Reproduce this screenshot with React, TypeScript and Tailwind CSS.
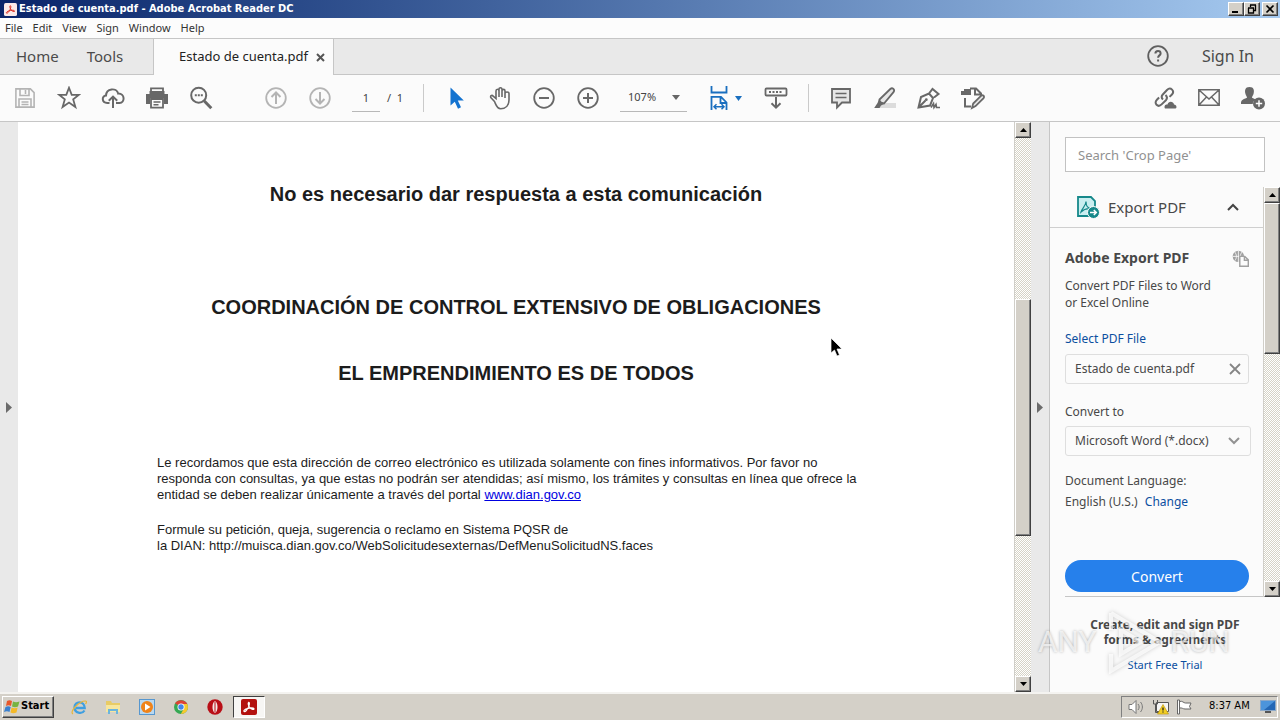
import type { ReactNode } from "react";

const DITHER =
  "bg-[repeating-conic-gradient(#ffffff_0_25%,#d6d3c6_0_50%)] bg-[length:2px_2px]";
const BEVEL =
  "bg-[#d4d0c8] border border-t-white border-l-white border-r-[#404040] border-b-[#404040] shadow-[inset_-1px_-1px_0_#808080]";

function Icon({ children, size = 24, className = "" }: { children: ReactNode; size?: number; className?: string }) {
  return (
    <svg
      width={size}
      height={size}
      viewBox="0 0 24 24"
      fill="none"
      stroke="currentColor"
      strokeWidth="1.8"
      className={`shrink-0 ${className}`}
      aria-hidden="true"
    >
      {children}
    </svg>
  );
}

function Tool({ label, children, faded = false }: { label: string; children: ReactNode; faded?: boolean }) {
  return (
    <button
      type="button"
      aria-label={label}
      className={`flex h-11 w-11 shrink-0 items-center justify-center ${faded ? "text-[#b4b4b4]" : "text-[#686868]"}`}
    >
      <Icon>{children}</Icon>
    </button>
  );
}

function Separator() {
  return <span className="h-7 w-px shrink-0 bg-[#cacaca]" />;
}

function AcrobatMark({ size, fill, stroke }: { size: number; fill: string; stroke: string }) {
  return (
    <svg width={size} height={size} viewBox="0 0 16 16" aria-hidden="true" className="shrink-0">
      <rect width="16" height="16" rx="2" fill={fill} />
      <path
        d="M3 12.4c-.7-.8 1.2-2.2 3.2-2.8 2.4-.8 6.4-1 6.8.2.4 1.3-2.6.8-4.2-1.2C7.400 6.800 6.700 4 7.600 3.400c1-.5 1 1.800.3 3.700-.9 2.400-3.600 6.500-4.900 5.300z"
        fill="none"
        stroke={stroke}
        strokeWidth="1.2"
      />
    </svg>
  );
}

function TitleBar() {
  const control = `flex h-[14px] w-4 items-center justify-center text-black ${BEVEL}`;
  return (
    <header className="flex h-[18px] shrink-0 items-center bg-gradient-to-r from-[#0a246a] to-[#a6caf0] pl-1 pr-[2px]">
      <AcrobatMark size={13} fill="#fbe9e8" stroke="#d8281c" />
      <h1 className="ml-[2px] grow whitespace-nowrap font-['DejaVu_Sans_Condensed','DejaVu_Sans',sans-serif] text-[11px] font-bold text-white">
        Estado de cuenta.pdf - Adobe Acrobat Reader DC
      </h1>
      <button type="button" aria-label="Minimize" className={control}>
        <svg width="10" height="10" viewBox="0 0 10 10"><path d="M1 7h6v2H1z" /></svg>
      </button>
      <button type="button" aria-label="Restore" className={control}>
        <svg width="10" height="10" viewBox="0 0 10 10">
          <path d="M3 1h6M3.500 1v2M8.500 1v5.500H7M1 4h6M1.500 4v5h5V4" fill="none" stroke="#000" strokeWidth="1.3" />
        </svg>
      </button>
      <button type="button" aria-label="Close" className={`ml-[2px] ${control}`}>
        <svg width="10" height="10" viewBox="0 0 10 10"><path d="M1.500 1.500l7 7M8.500 1.500l-7 7" stroke="#000" strokeWidth="1.7" /></svg>
      </button>
    </header>
  );
}

function MenuBar() {
  return (
    <nav className="flex h-5 shrink-0 items-center gap-[10px] bg-[#fcfcfc] pl-[5px] font-['Noto_Sans',sans-serif] text-[11px] text-[#333]">
      {["File", "Edit", "View", "Sign", "Window", "Help"].map((name) => (
        <button type="button" key={name}>{name}</button>
      ))}
    </nav>
  );
}

function TabBar() {
  return (
    <div className="flex h-[37px] shrink-0 border-y border-[#c6c6c6] bg-[#e9e9e9] text-[15px] text-[#4b4b4b]">
      <div className="flex w-[153px] shrink-0 items-center gap-7 pl-4">
        <button type="button">Home</button>
        <button type="button">Tools</button>
      </div>
      <div className="-mb-px flex w-[181px] shrink-0 items-center justify-end gap-2 border-x border-[#c6c6c6] bg-[#fbfbfb] pr-2 text-[13px] text-[#222]">
        <span>Estado de cuenta.pdf</span>
        <button type="button" aria-label="Close tab" className="text-[#555]">
          <svg width="9" height="9" viewBox="0 0 9 9"><path d="M1 1l7 7M8 1l-7 7" stroke="currentColor" strokeWidth="2" /></svg>
        </button>
      </div>
      <div className="flex grow items-center justify-end gap-8 pb-px pr-[26px] text-[16px]">
        <button type="button" aria-label="Help" className="text-[#5f5f5f]">
          <Icon>
            <circle cx="12" cy="12" r="9.8" />
            <path d="M9.400 9.500c0-3.400 5.200-3.300 5.200-.1 0 2-2.500 2-2.500 4.300M12.100 15.500v2" strokeWidth="2" />
          </Icon>
        </button>
        <button type="button">Sign In</button>
      </div>
    </div>
  );
}

function Toolbar() {
  return (
    <div className="flex h-[47px] shrink-0 items-center border-b border-[#c6c6c6] bg-[#fbfbfb] pl-[3px] pr-[5px] text-[11px] text-[#444]">
      <Tool label="Save" faded>
        <path d="M2.900 2.900h14.500l3.700 3.700v14.500H2.900zM7 3v6.500h9V3M12.500 4v4M6 21v-8h12v8M8.500 16h7M8.500 18.500h7" strokeWidth="1.6" />
      </Tool>
      <Tool label="Add to favorites">
        <path d="M12 1.800l2.700 7h7.300l-5.800 4.600 2.200 7.600L12 16.600 5.600 21l2.200-7.600L2 8.800h7.300z" />
      </Tool>
      <Tool label="Upload to cloud">
        <path d="M8.500 17H6.200C.8 17 .3 10.100 5 9.600 5.200 2.300 15.500 1.200 17.200 7.600c6.900-.3 7 9.400 1.300 9.400H15M12 22V11M7.800 14.800L12 10.600l4.200 4.200" strokeWidth="2" />
      </Tool>
      <Tool label="Print">
        <path d="M6 7V2.400h12V7M6 17v4.600h12V13H6z" />
        <path d="M1 8h22v10h-4v-6H5v6H1zM4.500 5h15v3h-15z" fill="currentColor" stroke="none" />
        <path d="M8.500 16h7M8.500 18.800h5" strokeWidth="1.4" />
      </Tool>
      <Tool label="Find text">
        <circle cx="9.7" cy="9.2" r="7.5" strokeWidth="2" />
        <path d="M15.300 15l7 7.200" strokeWidth="3" />
        <path d="M5.800 9.200h2M8.800 9.200h2M11.800 9.200h2" strokeWidth="2" />
      </Tool>
      <span className="w-[31px] shrink-0" />
      <Tool label="Previous page" faded>
        <circle cx="12" cy="12" r="9.8" />
        <path d="M12 18V6.500M7.500 11L12 6.500l4.500 4.500" strokeWidth="2" />
      </Tool>
      <Tool label="Next page" faded>
        <circle cx="12" cy="12" r="9.8" />
        <path d="M12 6v11.500M7.500 13l4.500 4.500 4.500-4.500" strokeWidth="2" />
      </Tool>
      <input
        aria-label="Page number"
        defaultValue="1"
        className="ml-[10px] h-[27px] w-7 shrink-0 border-b border-[#b8b8b8] bg-transparent text-center outline-none"
      />
      <span className="ml-[7px] w-9 shrink-0 whitespace-pre">/  1</span>
      <Separator />
      <span className="w-[10px] shrink-0" />
      <Tool label="Selection tool">
        <path d="M6.500 1.500v18l4.300-3.800 3.200 7 3-1.400-3.200-6.800h6z" fill="#1473d0" stroke="none" />
      </Tool>
      <Tool label="Hand tool">
        <path d="M6.500 15.500L3 11.800c-1.300-2 .9-3.200 2.200-1.600L8 12.500V5c0-2.300 3-2.300 3 0v6-7.500c0-2.400 3-2.400 3 0V11 5c0-2.200 3-2.200 3 0v7-4.500c0-2 4-2 4 0V14c0 5-3 8.700-8.300 8.700-3.800 0-4.500-3.500-6.200-7.200z" strokeWidth="1.6" />
      </Tool>
      <Tool label="Zoom out">
        <circle cx="12" cy="12" r="9.8" />
        <path d="M7 12h10" strokeWidth="2" />
      </Tool>
      <Tool label="Zoom in">
        <circle cx="12" cy="12" r="9.8" />
        <path d="M7 12h10M12 7v10" strokeWidth="2" />
      </Tool>
      <span className="relative ml-[10px] flex h-[27px] w-[67px] shrink-0 items-center border-b border-[#b8b8b8]">
        <select aria-label="Zoom level" defaultValue="107%" className="h-full w-full appearance-none bg-transparent pl-2 outline-none">
          <option>107%</option>
        </select>
        <svg width="8" height="5" viewBox="0 0 8 5" className="pointer-events-none absolute right-[7px]"><path d="M0 0h8L4 5z" fill="#666" /></svg>
      </span>
      <button type="button" aria-label="Fit width" className="ml-5 flex w-[47px] shrink-0 items-center gap-1 text-[#1a6fbf]">
        <Icon>
          <path d="M4.500 0v6.500h15V0M4.500 24V10.800h9.500l5.500 5.700V24M13.500 11v6h6" />
          <path d="M7 20.800h10M9.500 18.300L7 20.800l2.500 2.500M14.500 18.300l2.500 2.500-2.500 2.500" strokeWidth="1.5" />
        </Icon>
        <svg width="7" height="5" viewBox="0 0 7 5" className="shrink-0"><path d="M0 0h7L3.500 5z" fill="currentColor" /></svg>
      </button>
      <Tool label="Page display">
        <rect x="1.5" y="2.5" width="21" height="7" rx="1" />
        <path d="M5 6h14" strokeDasharray="2 1.5" strokeWidth="2" />
        <path d="M12 11v10.500M7.500 17.200l4.500 4.500 4.500-4.500" strokeWidth="2" />
      </Tool>
      <span className="w-[10px] shrink-0" />
      <Separator />
      <span className="w-[10px] shrink-0" />
      <Tool label="Add comment">
        <path d="M3 3h18v13.500h-8L8 21.500v-5H3z" fill="#e6e6e6" />
        <path d="M6.500 7.500h11M6.500 11.500h11" strokeWidth="1.5" />
      </Tool>
      <Tool label="Highlight text">
        <path d="M9 17h14v5H5z" fill="#dcdcdc" stroke="none" />
        <path d="M6.500 13.500L17.300 3c2.200-2 5 .8 3.200 3.200L11 17.500l-4.500-1z" fill="#e6e6e6" />
        <path d="M6 13.500l5 4.500-3 1.500L6.500 22H1.200l3.300-5z" fill="currentColor" stroke="none" />
      </Tool>
      <Tool label="Sign document">
        <path d="M1.500 21.500L4 11l8-3.500 4 4.500-3 7.500zM2 21l6.500-6.500M12 7.500L15.500 3l6 5-4.500 3.500" strokeWidth="2" />
        <path d="M14 21.500l2.500-4 .5 4 2-3 .5 3H23" strokeWidth="1.6" />
        <circle cx="9.3" cy="13.7" r="1.4" fill="currentColor" stroke="none" />
      </Tool>
      <Tool label="Edit document">
        <path d="M4 12v8.500h6" strokeWidth="2" />
        <path d="M0 5h3V3h7v6H0z" fill="currentColor" stroke="none" />
        <path d="M9 2.500h6l5 5V10M14 3v5.500h5.500" strokeWidth="2" />
        <path d="M11 22l1.200-4.500 8-7.800c1.700-1.300 3.600.6 2.400 2.400l-8 8z" fill="#e6e6e6" />
      </Tool>
      <span className="grow" />
      <Tool label="Share link">
        <path d="M10 13.500c-2-2-1.500-3.600-.2-5L14 4c3.600-3.600 8.300 1.100 4.700 4.700l-2.200 2.200M12.500 9c2 2 1.700 3.800.4 5.200l-4.300 4.200c-3.600 3.600-8.300-1.100-4.700-4.700l2.200-2.200" strokeWidth="2" />
        <path d="M12 22.500c-1.500-3 1-4.500 2.500-4 1-4 6-3.500 6.500 0 3 0 3 4 1.500 4z" fill="currentColor" stroke="none" />
      </Tool>
      <Tool label="Send by email">
        <path d="M1.800 3.800h20.400v15.400H1.800zM2 4l10 9L22 4M2 19l7.500-8M22 19l-7.500-8" strokeWidth="1.5" />
      </Tool>
      <Tool label="Share with people">
        <path d="M8.500 1C13 1 13.500 4.500 12.500 8c-.6 2-1.500 2.400-1.500 3.800l3.800 1.700c-2.300 1.300-3 2.500-3 4.500H0c0-3.500.8-4.200 6-6.200C6 10.400 5 10 4.500 8c-1-3.500-.5-7 4-7z" fill="currentColor" stroke="none" />
        <circle cx="18" cy="17.5" r="6" fill="currentColor" stroke="none" />
        <path d="M14.800 17.500h6.400M18 14.300v6.400" stroke="#fff" strokeWidth="1.5" />
      </Tool>
    </div>
  );
}

function ScrollBar({ thumb }: { thumb: ReactNode }) {
  const arrow = `flex h-4 w-full shrink-0 items-center justify-center ${BEVEL}`;
  return (
    <div className={`flex w-[17px] shrink-0 flex-col border-l border-[#d0cec8] ${DITHER}`}>
      <button type="button" aria-label="Scroll up" className={arrow}>
        <svg width="7" height="4" viewBox="0 0 7 4"><path d="M0 4l3.500-4L7 4z" /></svg>
      </button>
      {thumb}
      <button type="button" aria-label="Scroll down" className={arrow}>
        <svg width="7" height="4" viewBox="0 0 7 4"><path d="M0 0h7L3.500 4z" /></svg>
      </button>
    </div>
  );
}

function PaneToggle({ label }: { label: string }) {
  return (
    <button type="button" aria-label={label} className="flex w-[18px] shrink-0 items-center justify-center bg-[#e9e9e9]">
      <svg width="6" height="11" viewBox="0 0 6 11"><path d="M0 0l6 5.500L0 11z" fill="#6b6b6b" /></svg>
    </button>
  );
}

function DocumentPage() {
  return (
    <main className="min-w-0 grow overflow-hidden bg-white pt-[60px] font-['Liberation_Sans',Arial,sans-serif] text-[#1c1c1c]">
      <div className="text-center text-[20px] font-bold leading-6">
        <h2>No es necesario dar respuesta a esta comunicación</h2>
        <h2 className="mt-[89px]">COORDINACIÓN DE CONTROL EXTENSIVO DE OBLIGACIONES</h2>
        <h2 className="mt-[42px]">EL EMPRENDIMIENTO ES DE TODOS</h2>
      </div>
      <div className="ml-[139px] mt-[70px] text-[13px] leading-4">
        <p>
          Le recordamos que esta dirección de correo electrónico es utilizada solamente con fines informativos. Por favor no
          <br />
          responda con consultas, ya que estas no podrán ser atendidas; así mismo, los trámites y consultas en línea que ofrece la
          <br />
          entidad se deben realizar únicamente a través del portal{" "}
          <a href="http://www.dian.gov.co" className="text-[#0000e0] underline">www.dian.gov.co</a>
        </p>
        <p className="mt-[19px]">
          Formule su petición, queja, sugerencia o reclamo en Sistema PQSR de
          <br />
          la DIAN: http://muisca.dian.gov.co/WebSolicitudesexternas/DefMenuSolicitudNS.faces
        </p>
      </div>
    </main>
  );
}

function Watermark() {
  return (
    <div
      aria-hidden="true"
      className="pointer-events-none absolute bottom-[18px] -left-3 flex items-center whitespace-nowrap font-['Roboto',sans-serif] text-[30px] leading-[64px] text-white/70 [text-shadow:0_0_3px_rgba(0,0,0,0.3)]"
    >
      <span>ANY</span>
      <svg width="70" height="64" viewBox="0 0 70 64" fill="none" className="mr-1 drop-shadow-[0_0_2px_rgba(0,0,0,0.25)]">
        <path d="M14 3l49 29-49 29V44M14 3v17M24 20v24l20-12z" stroke="#fff" strokeOpacity=".7" strokeWidth="4" />
      </svg>
      <span>RUN</span>
    </div>
  );
}

function ToolsPanel() {
  return (
    <aside className="relative flex w-[231px] shrink-0 flex-col border-l border-[#c6c6c6] bg-[#fbfbfb] text-[12px] text-[#484848]">
      <div className="pl-[15px] pr-[15px] pt-[15px]">
        <input
          type="search"
          aria-label="Search tools"
          placeholder="Search 'Crop Page'"
          className="h-[35px] w-full border border-[#c2c2c2] bg-white px-3 text-[13px] outline-none placeholder:text-[#919191]"
        />
      </div>
      <div className="mt-[15px] flex min-h-0 grow">
        <div className="flex min-w-0 grow flex-col">
          <button type="button" className="flex h-[41px] shrink-0 items-center border-b border-[#cfcfcf] pl-[26px] pr-6 text-[15px]">
            <Icon className="text-[#16888a]">
              <path d="M2 2h13l4 4v15H2z" fill="#c9eef0" />
              <path d="M5 17c1-4 5-6 5-10.500C10 12 12 13 16 14c-4-1-8 0-11 3z" strokeWidth="1.2" />
              <circle cx="17.5" cy="17.5" r="6" fill="currentColor" stroke="#fbfbfb" strokeWidth="1" />
              <path d="M14 17.500h6M17.800 15l2.500 2.500-2.500 2.500" stroke="#fff" strokeWidth="1.5" />
            </Icon>
            <span className="ml-2 grow text-left">Export PDF</span>
            <svg width="12" height="8" viewBox="0 0 12 8" fill="none"><path d="M1 7l5-5 5 5" stroke="#444" strokeWidth="2" /></svg>
          </button>
          <div className="flex grow flex-col pl-[15px] pt-[20px]">
            <div className="flex items-center justify-between pr-[14px]">
              <h2 className="text-[14px] font-bold leading-5">Adobe Export PDF</h2>
              <Icon size={17} className="text-[#a0a0a0]">
                <circle cx="9" cy="9" r="8" fill="currentColor" stroke="none" />
                <path d="M1 9h16M9 1v16M4 3c3 4 3 8 0 12M14 3c-3 4-3 8 0 12" stroke="#fbfbfb" strokeWidth="1.2" />
                <path d="M11 9h7l5 5v9H11zM17.500 9v5.500H23" fill="#fbfbfb" strokeWidth="2" />
              </Icon>
            </div>
            <p className="mt-[9px] leading-[17px]">Convert PDF Files to Word<br />or Excel Online</p>
            <a href="#select" className="mt-[19px] leading-[17px] text-[#0b4fa0]">Select PDF File</a>
            <div className="mt-[7px] flex h-[30px] w-[184px] shrink-0 items-center justify-between rounded-[3px] border border-[#dedede] px-[9px] text-[12px]">
              <span>Estado de cuenta.pdf</span>
              <button type="button" aria-label="Remove file" className="-mr-1">
                <svg width="16" height="12" viewBox="0 0 16 12"><path d="M3 1l10 10M13 1L3 11" stroke="#858585" strokeWidth="1.8" /></svg>
              </button>
            </div>
            <label htmlFor="format" className="mt-[19px] leading-[17px]">Convert to</label>
            <div className="relative mt-[6px] flex w-[186px] items-center">
              <select id="format" className="h-[30px] w-full appearance-none rounded-[3px] border border-[#dedede] bg-[#fbfbfb] pl-[9px] pr-8 outline-none">
                <option>Microsoft Word (*.docx)</option>
              </select>
              <svg width="12" height="8" viewBox="0 0 12 8" fill="none" className="pointer-events-none absolute right-[11px]">
                <path d="M1 1l5 5 5-5" stroke="#929292" strokeWidth="2" />
              </svg>
            </div>
            <p className="mt-[14px] leading-[21px]">
              Document Language:<br />English (U.S.) <a href="#language" className="ml-1 text-[#0b4fa0]">Change</a>
            </p>
            <div className="mt-auto border-b border-[#c6c6c6] pb-1">
              <button type="button" className="block h-8 w-[184px] rounded-full bg-[#2680eb] text-[14px] text-white">Convert</button>
            </div>
          </div>
        </div>
        <ScrollBar thumb={<div className="flex grow flex-col"><div className={`h-[40%] ${BEVEL}`} /></div>} />
      </div>
      <div className="h-[95px] shrink-0 pt-5 text-center text-[12px] leading-[15px]">
        <p className="font-bold">Create, edit and sign PDF<br />forms &amp; agreements</p>
        <a href="#trial" className="mt-[10px] block text-[11px] text-[#0b4fa0]">Start Free Trial</a>
      </div>
      <Watermark />
    </aside>
  );
}

function TaskButton({ label, children }: { label: string; children: ReactNode }) {
  return (
    <button type="button" aria-label={label} className="flex h-[22px] w-[34px] shrink-0 items-center justify-center">
      <svg width="16" height="16" viewBox="0 0 16 16">{children}</svg>
    </button>
  );
}

function Taskbar() {
  return (
    <footer className="flex h-7 shrink-0 items-center bg-[#d4d0c8] pl-[2px] pt-px font-['DejaVu_Sans_Condensed','DejaVu_Sans',sans-serif] text-[11px] text-black shadow-[inset_0_2px_0_#f4f3f0]">
      <button type="button" className={`flex h-[22px] w-[52px] shrink-0 items-center gap-px pl-px font-bold ${BEVEL}`}>
        <svg width="16" height="16" viewBox="0 0 16 16" className="shrink-0">
          <path d="M3 2c2-1.200 3.500-.8 5 0L7 7C5.500 6 3.500 6 2 7z" fill="#e8582b" />
          <path d="M9 2.500c2 1 4 1 6.500 0L14 7.500c-2 1-4 1-6 0z" fill="#77b340" />
          <path d="M1.500 8c2-1 3.500-.9 5.200 0l-1.200 5c-1.700-1-3.500-1-5.500 0z" fill="#3a80cf" />
          <path d="M7.600 8.500c2 1 4 1 6 0L12.500 13.500c-2.500 1-4 1-6 0z" fill="#f4b928" />
        </svg>
        Start
      </button>
      <span className="w-2 shrink-0" />
      <TaskButton label="Internet Explorer">
        <path d="M13.500 11.500c-2.500 4-10 3-10-3.200 0-6.500 10-6.800 10.200.7H5" fill="none" stroke="#3f9fe0" strokeWidth="2.3" />
        <path d="M2 15c-4-2 6-13 12.500-13 1.500 0 1 2 0 3" fill="none" stroke="#e8b63a" strokeWidth="1.2" />
      </TaskButton>
      <TaskButton label="File Explorer">
        <path d="M1 2h5l1 2h8v9H1z" fill="#e8cb65" />
        <path d="M1 6h14v7H1z" fill="#f7e69d" />
        <path d="M3 15v-5h10v5h-2v-3H5v3z" fill="#6cb5dc" />
      </TaskButton>
      <TaskButton label="Media Player">
        <rect x=".5" y=".5" width="15" height="15" fill="#b9d8f0" stroke="#5797cf" />
        <circle cx="8" cy="8" r="6" fill="#f08319" />
        <path d="M6 4.500v7l5.500-3.500z" fill="#fff" />
      </TaskButton>
      <TaskButton label="Chrome">
        <circle cx="8" cy="8" r="7" fill="#36a853" />
        <path d="M8 8L2 4.300C5 .2 11.500-.2 14.300 5H8z" fill="#dd4235" />
        <path d="M8 5h6.300c2 5-1.300 10-6.500 10L11 9.500z" fill="#f7c92e" />
        <circle cx="8" cy="8" r="3.5" fill="#fff" />
        <circle cx="8" cy="8" r="2.7" fill="#4286e8" />
      </TaskButton>
      <TaskButton label="Opera">
        <circle cx="8" cy="8" r="7.7" fill="#b90f17" />
        <ellipse cx="8" cy="8" rx="2.5" ry="5.8" fill="#f3e8e6" />
        <path d="M8 3v10" stroke="#b90f17" />
      </TaskButton>
      <button
        type="button"
        aria-label="Adobe Acrobat Reader DC"
        className="ml-px flex h-[22px] w-8 shrink-0 items-center justify-center border border-t-[#404040] border-l-[#404040] border-r-white border-b-white bg-[#f7f6f4]"
      >
        <AcrobatMark size={16} fill="#b3110e" stroke="#fff" />
      </button>
      <span className="grow" />
      <div className="mr-[2px] flex h-[22px] shrink-0 items-center border border-t-[#808080] border-l-[#808080] border-r-white border-b-white pl-[6px] pr-px">
        <svg width="16" height="16" viewBox="0 0 16 16" fill="#fff" stroke="#777">
          <path d="M1 5.500h3l4-4v13l-4-4H1z" /><path d="M10 5c1.500 2 1.500 4 0 6M12.500 3c2.500 3 2.500 7 0 10" fill="none" />
        </svg>
        <svg width="18" height="16" viewBox="0 0 18 16" className="ml-2">
          <path d="M4.500 3.500h12v9h-12z" fill="#f5f5f5" stroke="#555" />
          <path d="M1.500 1v4h4V1M3.500 5v8.500H8" fill="none" stroke="#555" />
          <path d="M11 5.500l5.500 9.500h-11z" fill="#f2cf23" stroke="#c29a12" strokeWidth=".7" />
          <path d="M11 8.500v3M11 12.500v1" stroke="#222" strokeWidth="1.3" />
        </svg>
        <svg width="17" height="16" viewBox="0 0 17 16" className="ml-[6px]" fill="#fff" stroke="#666">
          <path d="M1.500 1v14h2V1zM3.500 2.500c3-1 4 1.500 6 1.500H15l-1.500 3.500L15 10H9c-2 0-3-1.500-5.500-1z" />
        </svg>
        <time className="ml-4 w-[40px] whitespace-nowrap">8:37 AM</time>
        <svg width="16" height="15" viewBox="0 0 16 15" className="ml-[11px]">
          <rect x=".5" y="1.5" width="15" height="10" fill="#2467b5" stroke="#8ba8c8" />
          <path d="M1 2h14L4 11H1z" fill="#4c94db" /><path d="M5 12h6v2H5z" fill="#555" />
        </svg>
      </div>
    </footer>
  );
}

export default function App() {
  return (
    <div className="flex h-screen flex-col overflow-hidden bg-[#fbfbfb] font-['Noto_Sans',sans-serif]">
      <TitleBar />
      <MenuBar />
      <TabBar />
      <Toolbar />
      <div className="relative flex min-h-0 grow">
        <PaneToggle label="Show navigation pane" />
        <DocumentPage />
        <ScrollBar
          thumb={
            <div className="flex grow flex-col">
              <span className="h-[30%]" />
              <div className={`h-[44%] ${BEVEL}`} />
            </div>
          }
        />
        <PaneToggle label="Hide tools pane" />
        <ToolsPanel />
        <svg width="13" height="20" viewBox="0 0 13 20" className="pointer-events-none absolute left-[830px] top-[215px]" aria-hidden="true">
          <path d="M1 1v15l3.500-3 2.500 6 2.500-1L7 12h5z" fill="#000" stroke="#fff" strokeWidth=".7" />
        </svg>
      </div>
      <Taskbar />
    </div>
  );
}
